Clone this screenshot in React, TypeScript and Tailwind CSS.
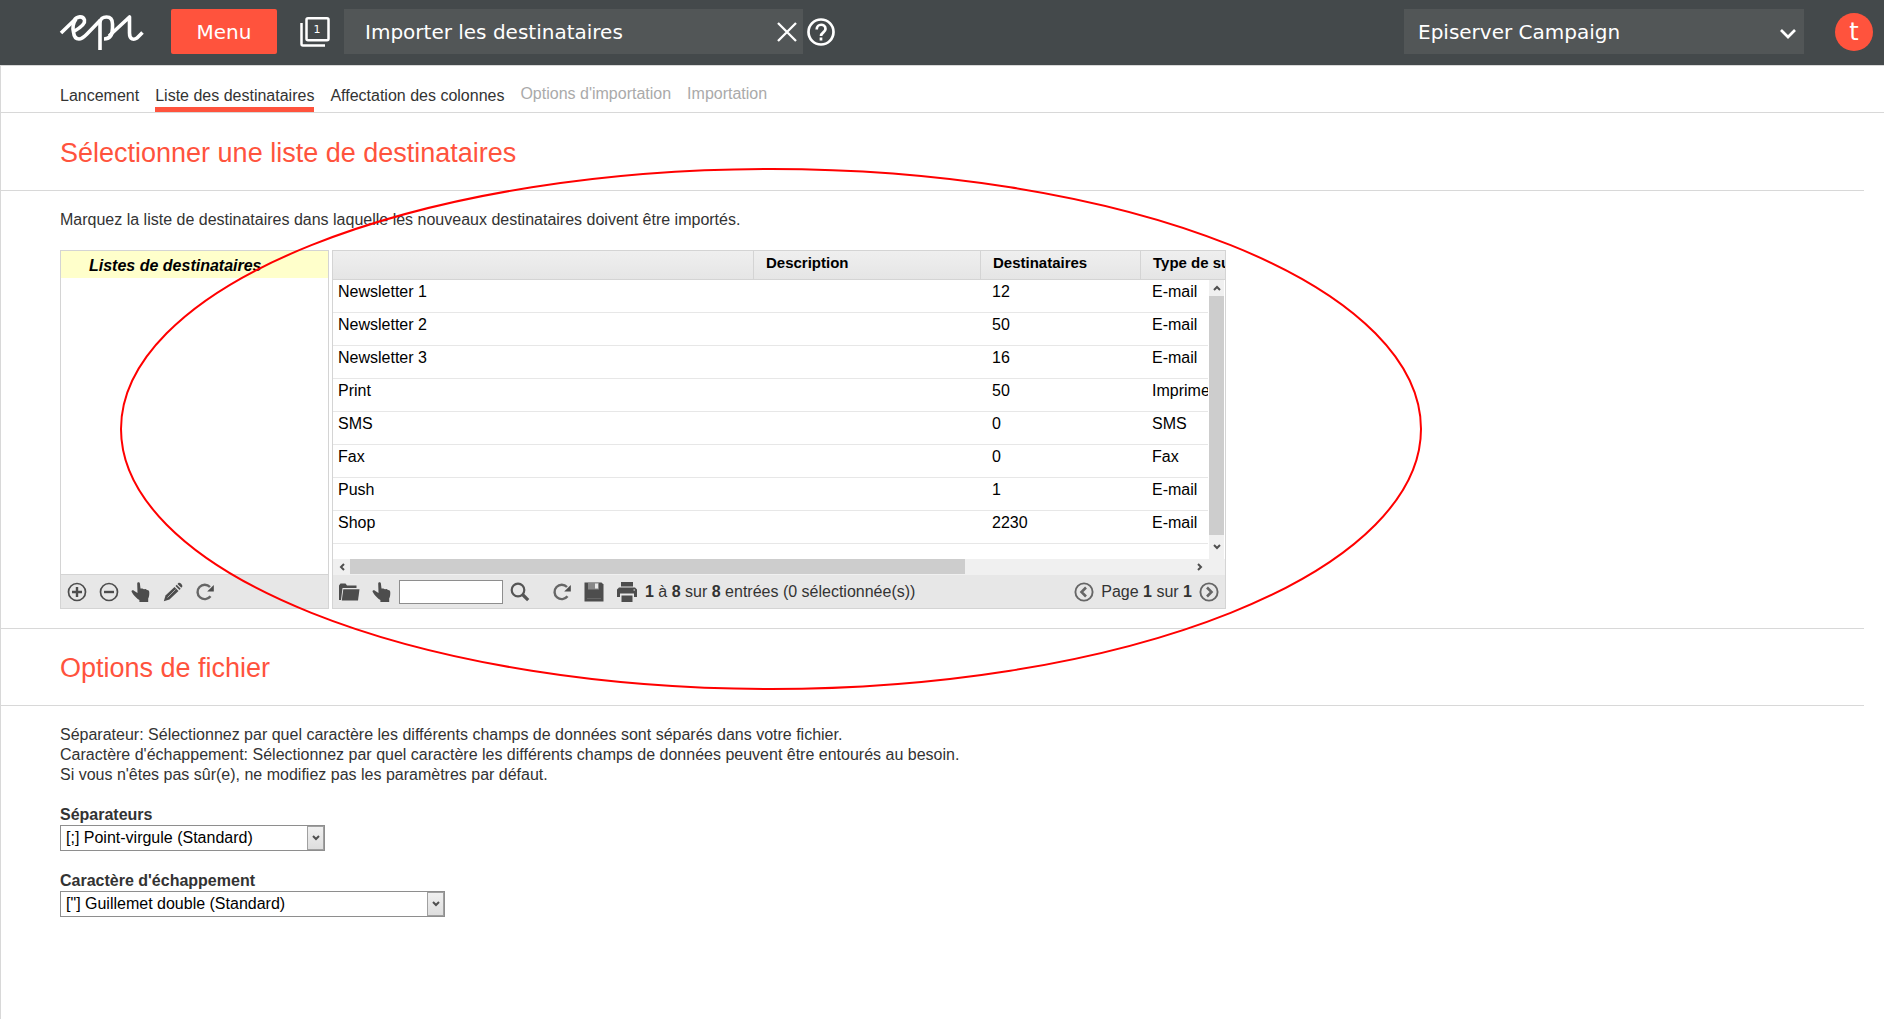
import type { ReactNode } from "react";

const tabs = [
  { label: "Lancement", state: "done" },
  { label: "Liste des destinataires", state: "active" },
  { label: "Affectation des colonnes", state: "done" },
  { label: "Options d'importation", state: "disabled" },
  { label: "Importation", state: "disabled" },
];

const lists = [
  { name: "Newsletter 1", recipients: 12, type: "E-mail" },
  { name: "Newsletter 2", recipients: 50, type: "E-mail" },
  { name: "Newsletter 3", recipients: 16, type: "E-mail" },
  { name: "Print", recipients: 50, type: "Imprimer" },
  { name: "SMS", recipients: 0, type: "SMS" },
  { name: "Fax", recipients: 0, type: "Fax" },
  { name: "Push", recipients: 1, type: "E-mail" },
  { name: "Shop", recipients: 2230, type: "E-mail" },
];

const Logo = () => (
  <svg viewBox="0 0 88 40" className="w-[88px] h-10" fill="none" stroke="#fff" strokeWidth="3.600" strokeLinejoin="round">
    <path d="M3 21 L16 8.500 C19 4 25 3.500 26.500 8 C27.500 12 20 17 16.500 19" />
    <path d="M18 7 C14.500 12 14.500 16 15.500 20 C16 25 18 27 21 27 C24 27 26 25 29 22 L42.500 8" />
    <path d="M42 38 V11 C42 7 45 5 48.500 5 C53 5 54.500 8 54.500 12 V16 C54.500 23 52 27 46 27" />
    <path d="M51 24 L71.500 5 V21 C71.500 28 76 28 79 26 L84.500 20.500" />
  </svg>
);

const PlusIcon = () => (
  <svg viewBox="0 0 20 20" className="size-5" fill="none" stroke="#4d4d4d">
    <circle cx="10" cy="10" r="8.500" strokeWidth="1.700" />
    <path d="M5 10h10M10 5v10" strokeWidth="2.400" />
  </svg>
);

const MinusIcon = () => (
  <svg viewBox="0 0 20 20" className="size-5" fill="none" stroke="#4d4d4d">
    <circle cx="10" cy="10" r="8.500" strokeWidth="1.700" />
    <path d="M5 10h10" strokeWidth="2.400" />
  </svg>
);

const HandIcon = () => (
  <svg viewBox="0 0 20 20" className="size-5" fill="#4d4d4d">
    <path d="M6.200 1.500c0-1.600 2.600-1.600 2.700 0L9.500 6.500l1.900-.1 1.500.8 1.800-.1 1.300.9 1.300.3c.8.600 1 1.500 1 2.500 0 3-.4 4.400-1.100 5.800V20H8.400v-1.900C6 16.800 4 14.300 2.300 12.400L.6 9.800C.2 8.300 1.800 7.700 3 8.700l3.500 2.400z" />
  </svg>
);

const PencilIcon = () => (
  <svg viewBox="0 0 20 20" className="size-5" fill="#4d4d4d">
    <path d="M.8 19.200 2.500 13.500 11.500 5l4 4-9 8.500z" />
    <path d="m12.500 4 1.200-1.200 4 4L16.500 8zM14.500 2l.9-.9c1.200-1.200 4.900 2 3.800 3.700l-.9.9z" />
    <path d="m4.500 15.500 8-8" stroke="#e7e7e7" strokeWidth=".6" />
  </svg>
);

const RefreshIcon = () => (
  <svg viewBox="0 0 20 20" className="size-5">
    <path d="M15.500 14.300A7.200 7.200 0 1 1 15 5" fill="none" stroke="#666" strokeWidth="2.400" />
    <path d="M18.800 3v6.500h-6.600z" fill="#4d4d4d" />
  </svg>
);

const FolderIcon = () => (
  <svg viewBox="0 0 22 20" className="w-[22px] h-5" fill="#4d4d4d">
    <path d="M1 18V3.500L2.500 1.500h5L9 3.500h9.500V6H4.500L3 18z" />
    <path d="M5.300 7.200H21.500L20 18.500H3.800z" />
  </svg>
);

const SearchIcon = () => (
  <svg viewBox="0 0 20 20" className="size-5" fill="none" stroke="#555">
    <circle cx="8" cy="8" r="6.300" strokeWidth="2.200" />
    <path d="m12.500 12.500 5.700 5.700" strokeWidth="3.200" />
  </svg>
);

const SaveIcon = () => (
  <svg viewBox="0 0 20 20" className="size-5">
    <path d="M.5.500h17l2 2v17H.5z" fill="#4d4d4d" />
    <path d="M4 1h11v6.500H4z" fill="#888" />
    <path d="M11 1.500h3v5h-3z" fill="#e7e7e7" />
    <path d="M3 16.500h14" stroke="#666" />
  </svg>
);

const PrintIcon = () => (
  <svg viewBox="0 0 22 20" className="w-[22px] h-5" fill="#4d4d4d">
    <path d="M5 0h12v4.500H5zM1 7.500 3 5.500h16l2 2V15h-3v-3.500H4V15H1zM5.500 13.500h11V20h-11z" />
    <path d="M17.500 8h1.500" stroke="#e7e7e7" />
  </svg>
);

const PageArrow = ({ d }: { d: string }) => (
  <svg viewBox="0 0 20 20" className="size-5" fill="none" stroke="#666">
    <circle cx="10" cy="10" r="8.600" strokeWidth="1.900" />
    <path d={d} strokeWidth="2.600" />
  </svg>
);

const Chevron = ({ d }: { d: string }) => (
  <svg viewBox="0 0 10 10" className="size-[10px]" fill="none" stroke="#505050" strokeWidth="2">
    <path d={d} />
  </svg>
);

const ToolButton = ({ label, children }: { label: string; children: ReactNode }) => (
  <button type="button" aria-label={label} className="shrink-0">
    {children}
  </button>
);

const SectionTitle = ({ children }: { children: ReactNode }) => (
  <h2 className="mr-5 pl-[59px] pt-[23px] pb-[21px] border-b border-[#d8d8d8] text-[27px] leading-8 text-[#ff533d]">
    {children}
  </h2>
);

const Dropdown = ({ id, label, value, width }: { id: string; label: string; value: string; width: string }) => (
  <div className="flex flex-col items-start">
    <label htmlFor={id} className="font-bold leading-5">
      {label}
    </label>
    <div className={`relative ${width}`}>
      <select id={id} className="appearance-none block w-full h-[26px] pl-[5px] border border-[#8e8e8e] bg-white text-black">
        <option>{value}</option>
      </select>
      <span className="absolute inset-y-px right-px w-[17px] flex items-center justify-center pointer-events-none border border-[#a0a0a0] bg-linear-to-b from-[#f0f0f0] to-[#dedede]">
        <Chevron d="M2 3l3 3 3-3" />
      </span>
    </div>
  </div>
);

const TopBar = () => (
  <header className="flex items-center h-[65px] pl-[58px] pr-[11px] pb-[2px] bg-[#44494b] text-white text-xl font-['DejaVu_Sans',sans-serif]">
    <Logo />
    <button type="button" className="ml-[25px] w-[106px] h-[45px] rounded-xs bg-[#ff533d]">
      Menu
    </button>
    <div className="relative ml-[23px] size-[30px]">
      <svg viewBox="0 0 30 30" className="size-[30px]" fill="none" stroke="#fff" strokeWidth="2.500">
        <rect x="6.500" y="1.300" width="22" height="22" rx="1.500" />
        <path d="M1.500 6v21q0 1.500 1.500 1.500h22" />
      </svg>
      <span className="absolute top-0 left-[6px] w-[22px] text-center text-[11px] leading-[26px]">1</span>
    </div>
    <div className="ml-[14px] flex items-center justify-between w-[459px] h-[45px] pl-[21px] pr-[6px] bg-[#525657]">
      <h1>Importer les destinataires</h1>
      <button type="button" aria-label="Fermer">
        <svg viewBox="0 0 20 20" className="size-5" stroke="#fff" strokeWidth="2.300">
          <path d="m1 1 18 18M19 1 1 19" />
        </svg>
      </button>
    </div>
    <button type="button" aria-label="Aide" className="ml-1">
      <svg viewBox="0 0 28 28" className="size-7" fill="none" stroke="#fff" strokeWidth="2.700">
        <circle cx="14" cy="14" r="12.500" />
        <path d="M9.700 11.500C9.700 5 18.500 5.500 18.500 11c0 3.200-4.500 3.500-4.500 7M14 19.500v3" />
      </svg>
    </button>
    <div className="relative ml-auto w-[400px]">
      <select aria-label="Application" className="appearance-none block w-full h-[45px] pl-[14px] bg-[#525657]">
        <option>Episerver Campaign</option>
      </select>
      <svg viewBox="0 0 16 10" className="absolute right-2 top-5 w-4 h-[10px] pointer-events-none" fill="none" stroke="#fff" strokeWidth="2.700">
        <path d="m1 1 7 7 7-7" />
      </svg>
    </div>
    <button type="button" className="ml-[31px] size-[38px] rounded-full bg-[#ff533d] text-2xl leading-8">
      t
    </button>
  </header>
);

const TreePanel = () => (
  <div className="flex flex-col w-[269px] border border-[#d4d4d4]">
    <div className="h-[27px] pl-7 pt-[3px] bg-[#ffffcb] font-bold italic leading-6 text-black">Listes de destinataires</div>
    <div className="mt-auto flex items-center gap-3 h-[34px] pl-[6px] bg-[#e7e7e7] border-t border-[#d4d4d4]">
      <ToolButton label="Ajouter"><PlusIcon /></ToolButton>
      <ToolButton label="Supprimer"><MinusIcon /></ToolButton>
      <ToolButton label="Sélectionner"><HandIcon /></ToolButton>
      <ToolButton label="Modifier"><PencilIcon /></ToolButton>
      <ToolButton label="Actualiser"><RefreshIcon /></ToolButton>
    </div>
  </div>
);

const ListPanel = () => (
  <div className="w-[894px] border border-[#d4d4d4]">
    <div className="relative h-[308px] overflow-hidden">
      <table className="table-fixed w-[1100px] border-separate border-spacing-0 text-black text-left">
        <thead>
          <tr className="bg-linear-to-b from-[#efefef] to-[#e5e5e5] text-[15px] leading-6 [&>th]:h-[29px] [&>th]:pb-1 [&>th]:border-b [&>th]:border-[#d4d4d4]">
            <th className="w-[421px] border-r" aria-label="Nom" />
            <th className="w-[227px] pl-3 border-r">Description</th>
            <th className="w-[160px] pl-3 border-r">Destinataires</th>
            <th className="pl-3">Type de support</th>
          </tr>
        </thead>
        <tbody>
          {lists.map((list) => (
            <tr key={list.name} className="align-top leading-6 [&>td]:h-[33px] [&>td]:border-b [&>td]:border-[#e7e7e7]">
              <td className="pl-[5px]">{list.name}</td>
              <td />
              <td className="pl-[11px]">{list.recipients}</td>
              <td className="pl-[11px]">{list.type}</td>
            </tr>
          ))}
        </tbody>
      </table>
      <div className="absolute right-0 top-[29px] bottom-0 w-[17px] px-px bg-white">
        <div className="flex flex-col items-center h-full bg-[#f0f0f0]">
          <span className="flex items-center h-4"><Chevron d="M2 7l3-3 3 3" /></span>
          <span className="w-full h-[239px] shrink-0 bg-[#cdcdcd]" />
          <span className="flex items-center grow"><Chevron d="M2 3l3 3 3-3" /></span>
        </div>
      </div>
    </div>
    <div className="flex items-center h-4 bg-[#f0f0f0]">
      <span className="flex justify-center w-[17px]"><Chevron d="M7 2L4 5l3 3" /></span>
      <span className="w-[615px] h-[15px] self-start bg-[#cdcdcd]" />
      <span className="ml-auto mr-[21px]"><Chevron d="M4 2l3 3-3 3" /></span>
    </div>
    <div className="flex items-center h-[33px] pl-[5px] pr-[6px] bg-[#e7e7e7]">
      <ToolButton label="Ouvrir"><FolderIcon /></ToolButton>
      <div className="flex items-center gap-[7px] ml-3">
        <ToolButton label="Sélectionner"><HandIcon /></ToolButton>
        <input type="text" aria-label="Rechercher" className="w-[104px] h-6 px-1 bg-white border border-[#8e8e8e]" />
        <ToolButton label="Lancer la recherche"><SearchIcon /></ToolButton>
      </div>
      <div className="flex items-center gap-3 ml-[22px]">
        <ToolButton label="Actualiser"><RefreshIcon /></ToolButton>
        <ToolButton label="Enregistrer"><SaveIcon /></ToolButton>
        <ToolButton label="Imprimer"><PrintIcon /></ToolButton>
      </div>
      <p className="ml-[7px]">
        <b>1</b> à <b>8</b> sur <b>8</b> entrées (0 sélectionnée(s))
      </p>
      <div className="ml-auto flex items-center gap-[7px]">
        <ToolButton label="Page précédente"><PageArrow d="M12 5.500 7.500 10l4.500 4.500" /></ToolButton>
        <span>Page <b>1</b> sur <b>1</b></span>
        <ToolButton label="Page suivante"><PageArrow d="m8 5.500 4.500 4.500L8 14.500" /></ToolButton>
      </div>
    </div>
  </div>
);

const App = () => {
  return (
    <div className="relative min-h-screen flex flex-col bg-white text-[#333] text-base leading-5 font-['Liberation_Sans',Arial,sans-serif]">
      <TopBar />
      <main className="grow border-t border-l border-[#d8d8d8]">
        <nav className="flex items-end gap-4 h-[47px] pl-[59px] border-b border-[#d8d8d8]">
          {tabs.map((tab) =>
            tab.state === "disabled" ? (
              <span key={tab.label} className="pb-2 text-[#aaa]">{tab.label}</span>
            ) : (
              <a
                key={tab.label}
                href="#"
                className={`border-b-5 pb-px ${tab.state === "active" ? "border-[#ff533d]" : "border-transparent"}`}
              >
                {tab.label}
              </a>
            )
          )}
        </nav>

        <section className="pt-px">
          <SectionTitle>Sélectionner une liste de destinataires</SectionTitle>
          <div className="mr-5 pl-[59px] pt-[19px] pb-[19px] border-b border-[#d8d8d8]">
            <p>Marquez la liste de destinataires dans laquelle les nouveaux destinataires doivent être importés.</p>
            <div className="mt-5 flex gap-[3px]">
              <TreePanel />
              <ListPanel />
            </div>
          </div>
        </section>

        <section>
          <SectionTitle>Options de fichier</SectionTitle>
          <div className="pl-[59px] pt-[19px]">
            <p>Séparateur: Sélectionnez par quel caractère les différents champs de données sont séparés dans votre fichier.</p>
            <p>Caractère d'échappement: Sélectionnez par quel caractère les différents champs de données peuvent être entourés au besoin.</p>
            <p>Si vous n'êtes pas sûr(e), ne modifiez pas les paramètres par défaut.</p>
            <form className="mt-5 flex flex-col gap-5">
              <Dropdown id="separator" label="Séparateurs" value="[;] Point-virgule (Standard)" width="w-[265px]" />
              <Dropdown id="escape" label="Caractère d'échappement" value={'["] Guillemet double (Standard)'} width="w-[385px]" />
            </form>
          </div>
        </section>
      </main>

      {/* highlight around the list picker */}
      <svg
        viewBox="0 0 1302 522"
        className="absolute left-[120px] top-[168px] w-[1302px] h-[522px] pointer-events-none"
        fill="none"
        stroke="#f00"
        strokeWidth="2"
      >
        <ellipse cx="651" cy="261" rx="650" ry="260" />
      </svg>
    </div>
  );
};

export default App;
